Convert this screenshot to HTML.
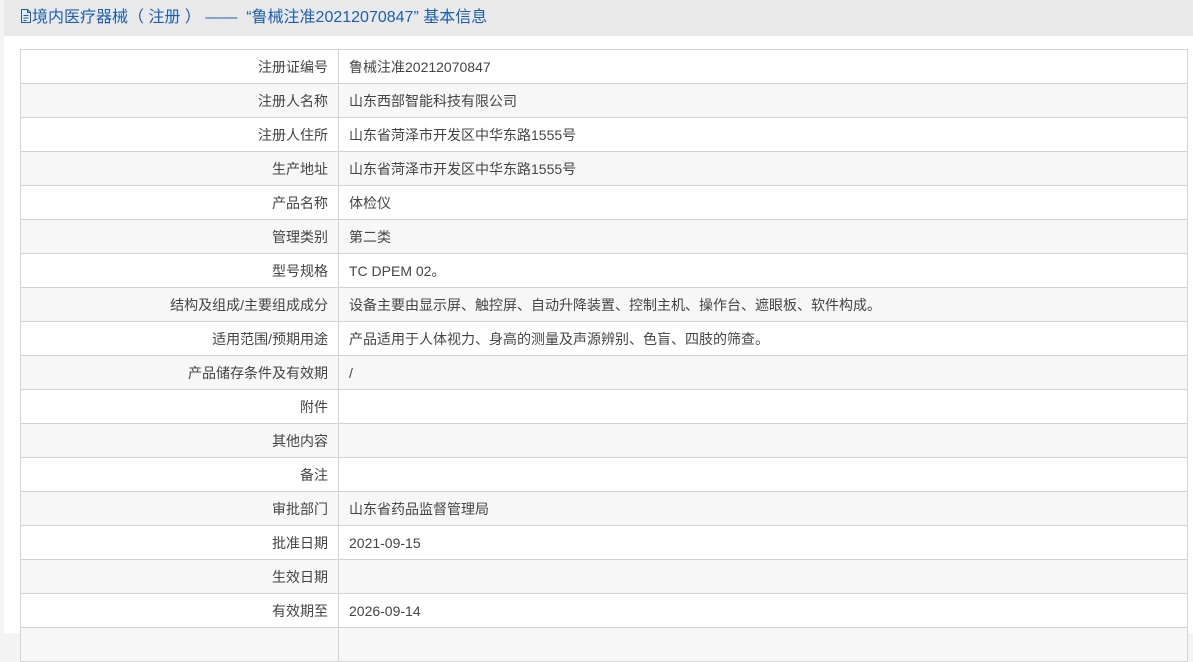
<!DOCTYPE html>
<html><head><meta charset="utf-8"><style>
body{margin:0;background:#f4f4f4;font-family:"Liberation Sans","Noto Sans CJK SC",sans-serif;width:1193px;height:633px;overflow:hidden}
.hd{position:absolute;left:4px;top:0;width:1189px;height:36px;background:#e9e9e9;color:#1a5fb4;font-size:16px;line-height:36px;padding-left:16px;box-sizing:border-box;white-space:nowrap}
.bd{position:absolute;left:4px;top:36px;width:1189px;height:597px;background:#fff}
table{position:absolute;left:20px;top:49px;width:1168px;border-collapse:collapse;font-size:14px;color:#444}
td{border:1px solid #d4d4d4;height:34px;padding:0 10px;box-sizing:border-box}
td:first-child{width:318px;text-align:right}
tr:nth-child(even){background:#f7f7f7}
</style></head><body>
<div class="hd"><svg width="12" height="14" viewBox="0 0 12 14" style="vertical-align:-1px"><path d="M1.5 .5h6l3 3v10h-9z M7.5.5v3h3 M3.5 6.5h5M3.5 9h5M3.5 11.5h3" fill="none" stroke="#1a5fb4"/></svg>境内医疗器械（&nbsp;注册&nbsp;）&nbsp;——&nbsp;&nbsp;“鲁械注准20212070847”&nbsp;基本信息</div>
<div class="bd"></div>
<table>
<tr><td>注册证编号</td><td>鲁械注准20212070847</td></tr>
<tr><td>注册人名称</td><td>山东西部智能科技有限公司</td></tr>
<tr><td>注册人住所</td><td>山东省菏泽市开发区中华东路1555号</td></tr>
<tr><td>生产地址</td><td>山东省菏泽市开发区中华东路1555号</td></tr>
<tr><td>产品名称</td><td>体检仪</td></tr>
<tr><td>管理类别</td><td>第二类</td></tr>
<tr><td>型号规格</td><td>TC DPEM 02。</td></tr>
<tr><td>结构及组成/主要组成成分</td><td>设备主要由显示屏、触控屏、自动升降装置、控制主机、操作台、遮眼板、软件构成。</td></tr>
<tr><td>适用范围/预期用途</td><td>产品适用于人体视力、身高的测量及声源辨别、色盲、四肢的筛查。</td></tr>
<tr><td>产品储存条件及有效期</td><td>/</td></tr>
<tr><td>附件</td><td></td></tr>
<tr><td>其他内容</td><td></td></tr>
<tr><td>备注</td><td></td></tr>
<tr><td>审批部门</td><td>山东省药品监督管理局</td></tr>
<tr><td>批准日期</td><td>2021-09-15</td></tr>
<tr><td>生效日期</td><td></td></tr>
<tr><td>有效期至</td><td>2026-09-14</td></tr>
<tr><td></td><td></td></tr>
</table>
</body></html>
